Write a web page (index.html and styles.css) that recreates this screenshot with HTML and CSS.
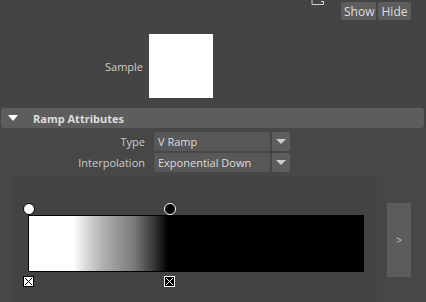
FILE: index.html
```html
<!DOCTYPE html>
<html>
<head>
    <title>Ramp Attributes</title>
    <link rel="stylesheet" href="styles.css">
</head>
<body>
    <div class="toolbar">
        <svg class="tool-icon" width="14" height="6" viewBox="0 0 14 6">
            <path d="M1 -2 V4.5 H12.5 V1" fill="none" stroke="#cfcfcf" stroke-width="1"/>
            <path d="M10 1.5 H12.5" fill="none" stroke="#cfcfcf" stroke-width="1"/>
        </svg>
        <button class="tool-btn">Show</button>
        <button class="tool-btn">Hide</button>
    </div>

    <div class="sample-row">
        <span class="sample-label">Sample</span>
        <div class="sample-swatch"></div>
    </div>

    <div class="section-header">
        <span class="caret"></span>
        <span class="section-title">Ramp Attributes</span>
    </div>

    <div class="section-body">
        <div class="attr-row">
            <label class="attr-label">Type</label>
            <div class="dropdown">V Ramp</div>
            <div class="dropdown-arrow"><span></span></div>
        </div>
        <div class="attr-row">
            <label class="attr-label">Interpolation</label>
            <div class="dropdown">Exponential Down</div>
            <div class="dropdown-arrow"><span></span></div>
        </div>

        <div class="ramp-area">
            <div class="ramp-panel">
                <div class="ramp">
                    <div class="ramp-bar"></div>
                    <span class="handle handle-white" style="left: 0px;"></span>
                    <span class="handle handle-black" style="left: 141px;"></span>
                    <svg class="marker" style="left: -5px;" width="11" height="11" viewBox="0 0 11 11">
                        <rect x="0.5" y="0.5" width="10" height="10" fill="#fff" stroke="#000"/>
                        <path d="M2 2 L9 9 M9 2 L2 9" stroke="#000" stroke-width="1"/>
                    </svg>
                    <svg class="marker" style="left: 136px;" width="11" height="11" viewBox="0 0 11 11">
                        <rect x="0.5" y="0.5" width="10" height="10" fill="#000" stroke="#fff"/>
                        <path d="M2 2 L9 9 M9 2 L2 9" stroke="#fff" stroke-width="1"/>
                    </svg>
                </div>
            </div>
            <div class="ramp-side">
                <button class="expand-btn">&gt;</button>
            </div>
        </div>
    </div>
</body>
</html>
```

FILE: styles.css
```css
body {
    margin: 0;
    background-color: #444444;
    font-family: "Open Sans", "DejaVu Sans", sans-serif;
    font-size: 11px;
    color: #cccccc;
    overflow: hidden;
}

.toolbar {
    display: flex;
    justify-content: flex-end;
    align-items: flex-start;
    height: 22px;
    padding-right: 15px;
}

.tool-icon {
    margin-right: 14px;
}

.tool-btn {
    margin-top: 2px;
    margin-left: 2px;
    height: 18px;
    padding: 0 3px;
    background-color: #5d5d5d;
    color: #dddddd;
    border: none;
    border-radius: 2px;
    font-family: inherit;
    font-size: 12px;
}

.tool-btn:first-of-type {
    width: 35px;
}

.tool-btn:last-of-type {
    width: 33px;
}

.sample-row {
    display: flex;
    align-items: center;
    margin-top: 12px;
}

.sample-label {
    width: 143px;
    text-align: right;
    margin-right: 6px;
}

.sample-swatch {
    width: 64px;
    height: 64px;
    background-color: #ffffff;
}

.section-header {
    display: flex;
    align-items: center;
    height: 20px;
    margin: 10px 2px 0 1px;
    background-color: #5d5d5d;
    border-radius: 3px;
}

.caret {
    width: 0;
    height: 0;
    margin-left: 7px;
    border-left: 5px solid transparent;
    border-right: 5px solid transparent;
    border-top: 6px solid #ffffff;
}

.section-title {
    margin-left: 15px;
    font-weight: bold;
    color: #dddddd;
}

.section-body {
    background-color: #474747;
    padding-top: 4px;
    height: 170px;
}

.attr-row {
    display: flex;
    align-items: center;
    height: 19px;
    margin-bottom: 2px;
}

.attr-label {
    width: 145px;
    text-align: right;
    margin-right: 9px;
}

.dropdown {
    width: 112px;
    height: 19px;
    line-height: 19px;
    padding-left: 4px;
    background-color: #585858;
    color: #dddddd;
    border-radius: 2px;
}

.dropdown-arrow {
    display: flex;
    align-items: center;
    justify-content: center;
    width: 18px;
    height: 19px;
    margin-left: 2px;
    background-color: #5d5d5d;
    border-radius: 2px;
}

.dropdown-arrow span {
    width: 0;
    height: 0;
    border-left: 5px solid transparent;
    border-right: 5px solid transparent;
    border-top: 5px solid #cccccc;
}

.ramp-area {
    display: flex;
    margin-top: 4px;
}

.ramp-panel {
    width: 365px;
    height: 126px;
    margin-left: 12px;
    background-color: #434343;
    padding-top: 27px;
    padding-left: 16px;
    box-sizing: border-box;
}

.ramp {
    position: relative;
    width: 336px;
    height: 84px;
}

.ramp-bar {
    position: absolute;
    left: 0;
    top: 12px;
    width: 334px;
    height: 55px;
    border: 1px solid #000000;
    background: linear-gradient(to right, #ffffff 44px, #d8d8d8 58px, #b4b4b4 72px, #7a7a7a 105px, #303030 127px, #000000 139px);
}

.handle {
    position: absolute;
    top: 0;
    width: 12px;
    height: 12px;
    margin-left: -5px;
    border-radius: 50%;
    box-sizing: border-box;
}

.handle-white {
    background-color: #ffffff;
    border: 1px solid #000000;
}

.handle-black {
    background-color: #000000;
    border: 1px solid #ffffff;
}

.marker {
    position: absolute;
    top: 73px;
}

.ramp-side {
    padding-top: 27px;
    padding-left: 10px;
}

.expand-btn {
    width: 24px;
    height: 74px;
    padding: 0;
    background-color: #5c5c5c;
    color: #cccccc;
    border: none;
    font-family: inherit;
    font-size: 10px;
}
```
